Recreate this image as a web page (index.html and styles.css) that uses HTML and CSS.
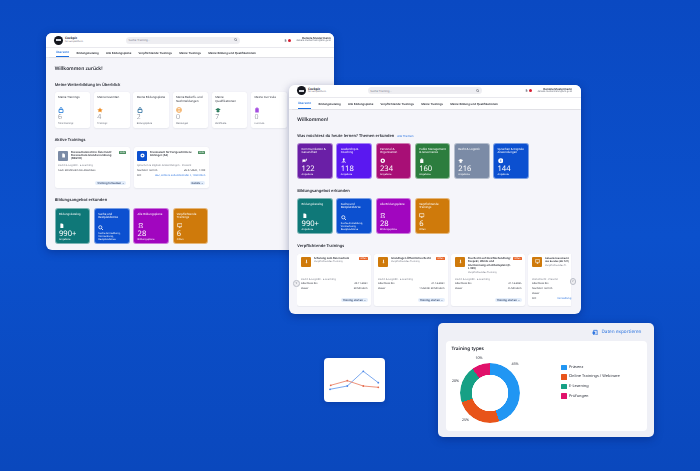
FILE: index.html
```html
<!DOCTYPE html>
<html lang="de">
<head>
    <meta charset="UTF-8">
    <meta name="viewport" content="width=device-width, initial-scale=1.0">
    <title>Cockpit | Bildungsportal</title>
    <link rel="stylesheet" href="styles.css">
</head>
<body>

    <svg class="icon-sprite" aria-hidden="true">
        <symbol id="i-bag" viewBox="0 0 12 12"><path d="M2 5h8v6H2zM4 5V3a2 2 0 0 1 4 0v2" fill="none" stroke="currentColor" stroke-width="1.6"/></symbol>
        <symbol id="i-star" viewBox="0 0 12 12"><path d="M6 .8l1.7 3.5 3.8.5-2.8 2.6.7 3.8L6 8.9l-3.4 1.8.7-3.8L.5 4.8l3.8-.5z" fill="currentColor"/></symbol>
        <symbol id="i-doc" viewBox="0 0 12 12"><path d="M3 1h4l2.5 2.5V11H3z" fill="currentColor"/></symbol>
        <symbol id="i-mail" viewBox="0 0 12 12"><circle cx="6" cy="6" r="5" fill="none" stroke="currentColor" stroke-width="1.3"/><path d="M3 4.5h6v3.5H3zM3 4.5l3 2 3-2" fill="none" stroke="currentColor"/></symbol>
        <symbol id="i-cap" viewBox="0 0 12 12"><path d="M6 2L.5 5 6 8l5.500-3zM3 7.500v2l3 1.500 3-1.500v-2" fill="currentColor"/></symbol>
        <symbol id="i-clip" viewBox="0 0 12 12"><path d="M2.500 2.500h7V11h-7z" fill="currentColor"/><path d="M4.500 1h3v2.500h-3z" fill="currentColor"/></symbol>
        <symbol id="i-search" viewBox="0 0 12 12"><circle cx="5" cy="5" r="3.500" fill="none" stroke="currentColor" stroke-width="1.600"/><path d="M7.500 7.500L11 11" stroke="currentColor" stroke-width="1.800"/></symbol>
        <symbol id="i-plan" viewBox="0 0 12 12"><path d="M2.500 1h7v3.500L7 6l2.500 1.500V11h-7V7.500L5 6 2.500 4.500z" fill="none" stroke="currentColor" stroke-width="1.500"/></symbol>
        <symbol id="i-screen" viewBox="0 0 12 12"><path d="M1 1.500h10V8H1zM4 11h4M6 8v3" fill="none" stroke="currentColor" stroke-width="1.400"/></symbol>
        <symbol id="i-chat" viewBox="0 0 12 12"><path d="M1 3h7v5H3L1 10zM9 1.500h2V6H9.500" fill="currentColor"/></symbol>
        <symbol id="i-people" viewBox="0 0 12 12"><circle cx="6" cy="2.500" r="2" fill="currentColor"/><path d="M6 5L2 10.500M6 5l4 5.500M6 5v5.500" stroke="currentColor" stroke-width="1.500"/></symbol>
        <symbol id="i-gear" viewBox="0 0 12 12"><circle cx="6" cy="6" r="3.500" fill="none" stroke="currentColor" stroke-width="3"/></symbol>
        <symbol id="i-info" viewBox="0 0 12 12"><circle cx="6" cy="6" r="5.500" fill="currentColor"/><path d="M6 3.500v5" stroke="#0c50d0" stroke-width="1.500"/></symbol>
        <symbol id="i-mic" viewBox="0 0 12 12"><path d="M5 1.500h2V7H5zM3.500 8h5L6 11z" fill="currentColor"/></symbol>
    </svg>

    <!-- Erstes Fenster: Startseite -->
    <section class="window window-start">
        <header class="topbar">
            <div class="brand">
                <span class="logo"><i></i></span>
                <div>
                    <div class="brand-name">Cockpit</div>
                    <div class="brand-sub">für Lernplattform</div>
                </div>
            </div>
            <div class="search">Suche Training...<svg class="search-icon"><use href="#i-search"/></svg></div>
            <div class="user">
                <svg class="bell"><use href="#i-doc"/></svg>
                <span class="flag"></span>
                <div class="user-text">
                    <div class="user-name">Daniela Mustermann</div>
                    <div class="user-mail">daniela.mustermann@bmi.gv.at</div>
                </div>
            </div>
        </header>
        <nav class="tabs">
            <a class="active">Übersicht</a>
            <a>Bildungskatalog</a>
            <a>Alle Bildungspläne</a>
            <a>Verpflichtende Trainings</a>
            <a>Meine Trainings</a>
            <a>Meine Bildung und Qualifikationen</a>
        </nav>
        <main class="content">
            <h1>Willkommen zurück!</h1>

            <h2 class="first">Meine Weiterbildung im Überblick</h2>
            <div class="row-six">
                <div class="stat">
                    <div class="stat-title">Meine Trainings</div>
                    <svg class="stat-icon c-blue"><use href="#i-bag"/></svg>
                    <div class="stat-num">6</div>
                    <div class="stat-label">Total trainings</div>
                </div>
                <div class="stat">
                    <div class="stat-title">Meine Favoriten</div>
                    <svg class="stat-icon c-orange"><use href="#i-star"/></svg>
                    <div class="stat-num">4</div>
                    <div class="stat-label">Trainings</div>
                </div>
                <div class="stat">
                    <div class="stat-title">Meine Bildungspläne</div>
                    <svg class="stat-icon c-navy"><use href="#i-bag"/></svg>
                    <div class="stat-num">2</div>
                    <div class="stat-label">Bildungspläne</div>
                </div>
                <div class="stat">
                    <div class="stat-title">Meine Bedarfs- und Nachmeldungen</div>
                    <svg class="stat-icon c-orange"><use href="#i-mail"/></svg>
                    <div class="stat-num">0</div>
                    <div class="stat-label">Meldungen</div>
                </div>
                <div class="stat">
                    <div class="stat-title">Meine Qualifikationen</div>
                    <svg class="stat-icon c-green"><use href="#i-cap"/></svg>
                    <div class="stat-num">7</div>
                    <div class="stat-label">Zertifikate</div>
                </div>
                <div class="stat">
                    <div class="stat-title">Meine Curricula</div>
                    <svg class="stat-icon c-violet"><use href="#i-clip"/></svg>
                    <div class="stat-num">0</div>
                    <div class="stat-label">Curricula</div>
                </div>
            </div>

            <h2>Aktive Trainings</h2>
            <div class="row-active">
                <div class="active-card">
                    <div class="active-head">
                        <span class="thumb bg-gray"><svg><use href="#i-doc"/></svg></span>
                        <div class="active-title">Datenschutzrecht in Österreich: Datenschutz-Grundverordnung (DSGVO)</div>
                        <span class="badge badge-green">Aktiv</span>
                    </div>
                    <div class="meta">Recht &amp; Logistik · E-Learning</div>
                    <div class="meta dark">noch 38 Minuten bis Abschluss</div>
                    <span class="pill">Training fortsetzen →</span>
                </div>
                <div class="active-card">
                    <div class="active-head">
                        <span class="thumb bg-blue"><svg><use href="#i-gear"/></svg></span>
                        <div class="active-title">Französisch für Fortgeschrittene Anfänger (A2)</div>
                        <span class="badge badge-green">Aktiv</span>
                    </div>
                    <div class="meta">Sprachen &amp; Digitale Anwendungen · Präsenz</div>
                    <div class="kv"><span>Nächster Termin</span><span>26.07.2024, 14:00</span></div>
                    <div class="kv"><span>Ort</span><a>BFZ, Hintere Zollamtsstraße 4, 1030 Wien</a></div>
                    <span class="pill">Details →</span>
                </div>
            </div>

            <h2>Bildungsangebot erkunden</h2>
            <div class="row-six">
                <div class="tile bg-teal">
                    <div class="tile-title">Bildungskatalog</div>
                    <svg class="tile-icon"><use href="#i-doc"/></svg>
                    <div class="tile-num">990+</div>
                    <div class="tile-label">Angebote</div>
                </div>
                <div class="tile bg-blue">
                    <div class="tile-title">Suche und Restplatzbörse</div>
                    <svg class="tile-icon"><use href="#i-search"/></svg>
                    <div class="tile-label">Suche Anmeldung, Vormerkung, Restplatzbörse</div>
                </div>
                <div class="tile bg-purple">
                    <div class="tile-title">Alle Bildungspläne</div>
                    <svg class="tile-icon"><use href="#i-plan"/></svg>
                    <div class="tile-num">28</div>
                    <div class="tile-label">Bildungspläne</div>
                </div>
                <div class="tile bg-orange">
                    <div class="tile-title">Verpflichtende Trainings</div>
                    <svg class="tile-icon"><use href="#i-screen"/></svg>
                    <div class="tile-num">6</div>
                    <div class="tile-label">Offen</div>
                </div>
            </div>
        </main>
    </section>

    <!-- Zweites Fenster: Themen -->
    <section class="window window-topics">
        <header class="topbar">
            <div class="brand">
                <span class="logo"><i></i></span>
                <div>
                    <div class="brand-name">Cockpit</div>
                    <div class="brand-sub">für Lernplattform</div>
                </div>
            </div>
            <div class="search">Suche Training...<svg class="search-icon"><use href="#i-search"/></svg></div>
            <div class="user">
                <svg class="bell"><use href="#i-doc"/></svg>
                <span class="flag"></span>
                <div class="user-text">
                    <div class="user-name">Daniela Mustermann</div>
                    <div class="user-mail">daniela.mustermann@bmi.gv.at</div>
                </div>
            </div>
        </header>
        <nav class="tabs">
            <a class="active">Übersicht</a>
            <a>Bildungskatalog</a>
            <a>Alle Bildungspläne</a>
            <a>Verpflichtende Trainings</a>
            <a>Meine Trainings</a>
            <a>Meine Bildung und Qualifikationen</a>
        </nav>
        <main class="content">
            <h1>Willkommen!</h1>

            <h2 class="first">Was möchtest du heute lernen? Themen erkunden <a class="link">Alle Themen</a></h2>
            <div class="row-six">
                <div class="tile bg-plum">
                    <div class="tile-title">Kommunikation &amp; Gesundheit</div>
                    <svg class="tile-icon"><use href="#i-chat"/></svg>
                    <div class="tile-num">122</div>
                    <div class="tile-label">Angebote</div>
                </div>
                <div class="tile bg-violet">
                    <div class="tile-title">Leadership &amp; Coaching</div>
                    <svg class="tile-icon"><use href="#i-people"/></svg>
                    <div class="tile-num">118</div>
                    <div class="tile-label">Angebote</div>
                </div>
                <div class="tile bg-magenta">
                    <div class="tile-title">Personal &amp; Organisation</div>
                    <svg class="tile-icon"><use href="#i-gear"/></svg>
                    <div class="tile-num">234</div>
                    <div class="tile-label">Angebote</div>
                </div>
                <div class="tile bg-green">
                    <div class="tile-title">Public Management &amp; Governance</div>
                    <svg class="tile-icon"><use href="#i-clip"/></svg>
                    <div class="tile-num">160</div>
                    <div class="tile-label">Angebote</div>
                </div>
                <div class="tile bg-gray">
                    <div class="tile-title">Recht &amp; Logistik</div>
                    <svg class="tile-icon"><use href="#i-cap"/></svg>
                    <div class="tile-num">216</div>
                    <div class="tile-label">Angebote</div>
                </div>
                <div class="tile bg-blue">
                    <div class="tile-title">Sprachen &amp; Digitale Anwendungen</div>
                    <svg class="tile-icon"><use href="#i-info"/></svg>
                    <div class="tile-num">144</div>
                    <div class="tile-label">Angebote</div>
                </div>
            </div>

            <h2 class="tight">Bildungsangebot erkunden</h2>
            <div class="row-six">
                <div class="tile bg-teal">
                    <div class="tile-title">Bildungskatalog</div>
                    <svg class="tile-icon"><use href="#i-doc"/></svg>
                    <div class="tile-num">990+</div>
                    <div class="tile-label">Angebote</div>
                </div>
                <div class="tile bg-blue">
                    <div class="tile-title">Suche und Restplatzbörse</div>
                    <svg class="tile-icon"><use href="#i-search"/></svg>
                    <div class="tile-label">Suche Anmeldung, Vormerkung, Restplatzbörse</div>
                </div>
                <div class="tile bg-purple">
                    <div class="tile-title">Alle Bildungspläne</div>
                    <svg class="tile-icon"><use href="#i-plan"/></svg>
                    <div class="tile-num">28</div>
                    <div class="tile-label">Bildungspläne</div>
                </div>
                <div class="tile bg-orange">
                    <div class="tile-title">Verpflichtende Trainings</div>
                    <svg class="tile-icon"><use href="#i-screen"/></svg>
                    <div class="tile-num">6</div>
                    <div class="tile-label">Offen</div>
                </div>
            </div>

            <h2>Verpflichtende Trainings</h2>
            <div class="carousel">
                <div class="carousel-track">
                    <div class="course">
                        <div class="course-head">
                            <span class="thumb bg-orange"><svg><use href="#i-mic"/></svg></span>
                            <div class="course-text">
                                <div class="course-title">Schulung zum Datenschutz</div>
                                <div class="course-sub">Verpflichtendes Training</div>
                            </div>
                            <span class="badge badge-orange">Offen</span>
                        </div>
                        <div class="meta">Recht &amp; Logistik · E-Learning</div>
                        <div class="kv"><span>Abschluss bis</span><span>30.11.2024</span></div>
                        <div class="kv"><span>Dauer</span><span>30 Minuten</span></div>
                        <span class="pill">Training starten →</span>
                    </div>
                    <div class="course">
                        <div class="course-head">
                            <span class="thumb bg-orange"><svg><use href="#i-mic"/></svg></span>
                            <div class="course-text">
                                <div class="course-title">Grundlagen Öffentliches Recht</div>
                                <div class="course-sub">Verpflichtendes Training</div>
                            </div>
                            <span class="badge badge-orange">Offen</span>
                        </div>
                        <div class="meta">Recht &amp; Logistik · E-Learning</div>
                        <div class="kv"><span>Abschluss bis</span><span>31.12.2024</span></div>
                        <div class="kv"><span>Dauer</span><span>1 Stunde 30 Minuten</span></div>
                        <span class="pill">Training starten →</span>
                    </div>
                    <div class="course">
                        <div class="course-head">
                            <span class="thumb bg-orange"><svg><use href="#i-mic"/></svg></span>
                            <div class="course-text">
                                <div class="course-title">Das Recht auf Gleichbehandlung: Respekt, Würde und Anerkennung am Arbeitsplatz (E-L 999)</div>
                                <div class="course-sub">Verpflichtendes Training</div>
                            </div>
                            <span class="badge badge-orange">Offen</span>
                        </div>
                        <div class="meta">Recht &amp; Logistik · E-Learning</div>
                        <div class="kv"><span>Abschluss bis</span><span>31.12.2025</span></div>
                        <div class="kv"><span>Dauer</span><span>45 Minuten</span></div>
                        <span class="pill">Training starten →</span>
                    </div>
                    <div class="course course-last">
                        <div class="course-head">
                            <span class="thumb bg-orange"><svg><use href="#i-screen"/></svg></span>
                            <div class="course-text">
                                <div class="course-title">Aktuelle Dienstrecht des Bundes (BD 727)</div>
                                <div class="course-sub">Verpflichtendes Tr.</div>
                            </div>
                        </div>
                        <div class="meta">Dienstrecht · Präsenz</div>
                        <div class="kv"><span>Abschluss bis</span></div>
                        <div class="kv"><span>Nächster Termin</span></div>
                        <div class="kv"><span>Dauer</span></div>
                        <div class="kv"><span>Ort</span><a>Verwaltung</a></div>
                    </div>
                </div>
                <span class="arrow arrow-left">‹</span>
                <span class="arrow arrow-right">›</span>
            </div>
        </main>
    </section>

    <!-- Kleines Liniendiagramm -->
    <div class="mini-chart">
        <svg viewBox="0 0 61 44" width="61" height="44">
            <polyline class="line-blue" points="6,31.300 23.300,28 39.300,13.300 54.300,24.700"/>
            <polyline class="line-orange" points="6.700,27.300 23.300,22.700 39.300,28 54.300,29.300"/>
            <g class="dots-blue">
                <circle cx="6" cy="31.300" r="0.900"/><circle cx="23.300" cy="28" r="0.900"/><circle cx="39.300" cy="13.300" r="0.900"/><circle cx="54.300" cy="24.700" r="0.900"/>
            </g>
            <g class="dots-orange">
                <circle cx="6.700" cy="27.300" r="0.900"/><circle cx="23.300" cy="22.700" r="0.900"/><circle cx="39.300" cy="28" r="0.900"/><circle cx="54.300" cy="29.300" r="0.900"/>
            </g>
        </svg>
    </div>

    <!-- Auswertung Trainingsarten -->
    <section class="report">
        <div class="export">
            <svg class="export-icon" viewBox="0 0 12 12"><path d="M3 2.500h6.500V11H3z" fill="none" stroke="currentColor" stroke-width="1.500"/><path d="M1 5h5v4H1z" fill="currentColor"/></svg>
            Daten exportieren
        </div>
        <div class="report-card">
            <div class="report-title">Training types</div>
            <div class="report-body">
                <div class="donut-wrap">
                    <div class="donut"></div>
                    <span class="pct pct-45">45%</span>
                    <span class="pct pct-25">25%</span>
                    <span class="pct pct-20">20%</span>
                    <span class="pct pct-10">10%</span>
                </div>
                <ul class="legend">
                    <li><i class="swatch s-blue"></i>Präsenz</li>
                    <li><i class="swatch s-orange"></i>Online Trainings / Webinare</li>
                    <li><i class="swatch s-teal"></i>E-Learning</li>
                    <li><i class="swatch s-pink"></i>Prüfungen</li>
                </ul>
            </div>
        </div>
    </section>

</body>
</html>
```

FILE: styles.css
```css
* {
    box-sizing: border-box;
}

html, body {
    margin: 0;
    height: 100%;
}

body {
    position: relative;
    width: 700px;
    height: 471px;
    overflow: hidden;
    background: linear-gradient(180deg, #0a49c2 0%, #0b50cc 50%, #0a48bd 100%);
    font-family: "Noto Sans", "Open Sans", sans-serif;
    color: #23262f;
    text-rendering: geometricPrecision;
}

.icon-sprite {
    display: none;
}

/* windows sit freely on the blue canvas */
.window {
    position: absolute;
    overflow: hidden;
    border-radius: 6px;
    background: #f5f5fa;
    box-shadow: 0 2px 8px rgba(0, 20, 80, 0.35);
    filter: blur(0.25px);
}

.window-start {
    left: 46px;
    top: 33px;
    width: 288px;
    height: 217px;
    --head-h: 14.3px;
    --tab-h: 10px;
    --brand-w: 72px;
    --h1-top: 9px;
    --user-pad: 3.300px;
    --tab-pad: 10px;
}

.window-topics {
    left: 289px;
    top: 84.500px;
    width: 292px;
    height: 229px;
    --head-h: 12.800px;
    --tab-h: 12px;
    --brand-w: 70.700px;
    --h1-top: 8px;
    --user-pad: 9px;
    --tab-pad: 9px;
}

/* top bar */
.topbar {
    display: flex;
    align-items: center;
    height: var(--head-h);
    padding: 0 var(--user-pad) 0 8px;
    background: #fff;
}

.brand {
    display: flex;
    align-items: center;
    gap: 2px;
    flex: 0 0 var(--brand-w);
}

.logo {
    display: flex;
    align-items: center;
    justify-content: center;
    width: 9px;
    height: 9px;
    border-radius: 50%;
    background: #14161d;
}

.logo i {
    width: 5px;
    height: 1.500px;
    background: #d7d9e0;
}

.brand-name {
    font-size: 3.200px;
    font-weight: 700;
    line-height: 3.800px;
}

.brand-sub {
    font-size: 2.200px;
    line-height: 2.600px;
    color: #5f6472;
}

.search {
    display: flex;
    align-items: center;
    justify-content: space-between;
    flex: 0 0 114px;
    height: 7px;
    padding: 0 2.500px;
    border-radius: 4px;
    background: #eeeef2;
    font-size: 2.800px;
    color: #7d818c;
}

.search-icon {
    width: 3.500px;
    height: 3.500px;
    color: #555a66;
}

.user {
    display: flex;
    align-items: center;
    gap: 1px;
    margin-left: auto;
}

.bell {
    width: 3px;
    height: 3px;
    color: #8a8e99;
}

.flag {
    width: 3px;
    height: 3px;
    margin-right: 4px;
    border-radius: 50%;
    background: #d81b30;
}

.user-text {
    text-align: right;
}

.user-name {
    font-size: 2.800px;
    font-weight: 600;
    line-height: 3.300px;
}

.user-mail {
    font-size: 2.300px;
    line-height: 2.900px;
    color: #5f6472;
}

/* tabs */
.tabs {
    display: flex;
    align-items: center;
    gap: 7.300px;
    height: var(--tab-h);
    padding: 0 var(--tab-pad);
    background: #fff;
    border-top: 0.500px solid #e9e9ee;
    box-shadow: 0 0.500px 1px rgba(0, 0, 0, 0.08);
    font-size: 2.800px;
    font-weight: 600;
}

.tabs a {
    display: flex;
    align-items: center;
    height: 100%;
    color: #23262f;
}

.tabs a.active {
    color: #1a6ee0;
    border-bottom: 0.700px solid #1a6ee0;
}

/* main area */
.content {
    padding: var(--h1-top) 0 0 8.700px;
}

.window-topics .content {
    padding-left: 8.300px;
}

h1 {
    margin: 0 0 10.500px;
    font-size: 4.800px;
    font-weight: 600;
    line-height: 6px;
}

h2 {
    margin: 10px 0 4.600px;
    font-size: 3.950px;
    font-weight: 600;
    line-height: 5px;
}

h2.first {
    margin-top: 0;
}

h2.tight {
    margin-top: 9.300px;
}

.link {
    margin-left: 2px;
    font-size: 2.800px;
    font-weight: 400;
    color: #2c74e0;
}

.row-six {
    display: grid;
    grid-template-columns: repeat(6, 35.600px);
    gap: 3.700px;
}

.window-topics .row-six {
    gap: 3.600px;
}

/* white stat cards */
.stat {
    display: flex;
    flex-direction: column;
    height: 35.500px;
    padding: 3.500px 3.400px 3px;
    border-radius: 2.500px;
    background: #fff;
    box-shadow: 0 0.500px 1.500px rgba(40, 50, 90, 0.07);
}

.stat-title {
    font-size: 2.900px;
    line-height: 3.900px;
    color: #2c303b;
}

.stat-icon {
    width: 6px;
    height: 6px;
    margin-top: auto;
    margin-bottom: 1.300px;
}

.stat-num {
    font-size: 7px;
    font-weight: 300;
    line-height: 7.200px;
    color: #6f7380;
}

.stat-label {
    font-size: 2.300px;
    line-height: 3.200px;
    color: #5f6472;
}

.c-blue { color: #1e79d8; }
.c-orange { color: #ef8c22; }
.c-navy { color: #2d6f9f; }
.c-green { color: #2e7d5f; }
.c-violet { color: #a54ee0; }

/* aktive trainings */
.row-active {
    display: grid;
    grid-template-columns: repeat(2, 75px);
    gap: 4px;
}

.active-card,
.course {
    position: relative;
    border-radius: 2.500px;
    background: #fff;
    box-shadow: 0 0.500px 1.500px rgba(40, 50, 90, 0.07);
}

.active-card {
    height: 41px;
    padding: 3.400px 3.400px;
}

.active-head {
    display: flex;
    align-items: flex-start;
    gap: 3px;
    height: 12.300px;
}

.active-title {
    flex: 1;
    font-size: 2.650px;
    font-weight: 600;
    line-height: 3.300px;
}

.thumb {
    display: flex;
    align-items: center;
    justify-content: center;
    flex: 0 0 10px;
    height: 10px;
    border-radius: 1px;
    color: #fff;
}

.thumb svg {
    width: 5px;
    height: 5px;
}

.badge {
    flex: 0 0 auto;
    height: 3.400px;
    margin-left: -1.500px;
    padding: 0 1.200px;
    border-radius: 0.600px;
    font-size: 2.200px;
    line-height: 3.400px;
    color: #fff;
}

.badge-green { background: #4f8f63; }
.badge-orange { background: #e8662a; }

.meta {
    font-size: 2.600px;
    line-height: 4.700px;
    color: #777b87;
}

.meta.dark {
    color: #2c303b;
}

.kv {
    display: flex;
    justify-content: space-between;
    font-size: 2.600px;
    line-height: 4.900px;
    color: #2c303b;
}

.kv a {
    color: #2c74e0;
}

.pill {
    position: absolute;
    right: 3.400px;
    bottom: 3.100px;
    height: 4.800px;
    padding: 0 1.800px;
    border-radius: 2.400px;
    background: #e4eefb;
    font-size: 2.600px;
    font-weight: 600;
    line-height: 4.800px;
    color: #2a3f66;
}

/* coloured tiles */
.tile {
    display: flex;
    flex-direction: column;
    height: 36px;
    padding: 3.500px 3.300px 2.400px;
    border: 0.500px solid rgba(255, 255, 255, 0.45);
    border-radius: 3px;
    color: #fff;
}

.tile-title {
    font-size: 2.850px;
    line-height: 3.600px;
}

.tile-icon {
    width: 5.500px;
    height: 5.500px;
    margin-top: auto;
    margin-bottom: 1.500px;
}

.tile-num {
    font-size: 7.600px;
    line-height: 8px;
}

.tile-label {
    font-size: 2.500px;
    line-height: 3px;
}

.bg-teal { background: #0f7878; }
.bg-blue { background: #0c50d0; }
.bg-purple { background: #a106bf; }
.bg-orange { background: #cf7a0b; }
.bg-plum { background: #6a1fa6; }
.bg-violet { background: #5a18f0; }
.bg-magenta { background: #a80f76; }
.bg-green { background: #2c7d3e; }
.bg-gray { background: #7b8ba6; }

/* carousel */
.carousel {
    position: relative;
    width: 275px;
}

.carousel-track {
    display: flex;
    gap: 3px;
    overflow: hidden;
    padding-bottom: 1px;
}

.course {
    flex: 0 0 74px;
    height: 51.700px;
    padding: 3px 3.800px;
}

.course-last {
    flex-basis: 43px;
    padding-right: 0;
    border-radius: 2.500px 0 0 2.500px;
}

.course-last .course-title {
    font-size: 2.400px;
}

.course-head {
    display: flex;
    align-items: flex-start;
    gap: 3px;
    height: 19.700px;
}

.course-text {
    flex: 1;
}

.course-title {
    font-size: 2.650px;
    font-weight: 600;
    line-height: 3.400px;
}

.course-sub {
    font-size: 2.500px;
    line-height: 3.500px;
    color: #777b87;
}

.arrow {
    position: absolute;
    display: flex;
    align-items: center;
    justify-content: center;
    width: 6.700px;
    height: 6.700px;
    border: 0.600px solid #b9bcc6;
    border-radius: 50%;
    background: #eeeef2;
    font-size: 4.500px;
    line-height: 1;
    color: #555a66;
}

.arrow-left { left: -4.400px; top: 26.300px; }
.arrow-right { right: -4px; top: 24.300px; }

/* small line chart */
.mini-chart {
    position: absolute;
    left: 324px;
    top: 358px;
    width: 61px;
    height: 44px;
    border-radius: 4px;
    background: #fff;
    box-shadow: 0 1px 5px rgba(0, 20, 80, 0.25);
    filter: blur(0.25px);
}

.line-blue,
.line-orange {
    fill: none;
    stroke-width: 0.800;
}

.line-blue { stroke: #5b93ea; }
.line-orange { stroke: #e8775a; }
.dots-blue { fill: #4a86e8; }
.dots-orange { fill: #e56a4c; }

/* report */
.report {
    position: absolute;
    left: 438px;
    top: 323px;
    width: 215.500px;
    height: 114px;
    padding: 0 6.500px 6px 8px;
    border-radius: 5px;
    background: #eff0f6;
    box-shadow: 0 2px 8px rgba(0, 20, 80, 0.35);
    filter: blur(0.25px);
}

.export {
    display: flex;
    align-items: center;
    justify-content: flex-end;
    gap: 2.500px;
    height: 18px;
    padding-right: 5.500px;
    font-size: 4.700px;
    color: #2c74e0;
}

.export-icon {
    width: 6.500px;
    height: 6.500px;
}

.report-card {
    height: 90px;
    padding: 4.500px 5.500px;
    border-radius: 4px;
    background: #fff;
}

.report-title {
    font-size: 4.700px;
    font-weight: 600;
    line-height: 6px;
}

.report-body {
    display: flex;
    align-items: flex-start;
}

.donut-wrap {
    position: relative;
    flex: 0 0 109.500px;
    height: 75px;
}

.donut {
    position: absolute;
    left: 8.500px;
    top: 11.500px;
    width: 60px;
    height: 60px;
    border-radius: 50%;
    background: conic-gradient(#2196f3 0 45%, #e8541a 45% 70%, #16a085 70% 90%, #e0116a 90% 100%);
    -webkit-mask: radial-gradient(circle, transparent 18px, #000 18.500px);
    mask: radial-gradient(circle, transparent 18px, #000 18.500px);
}

.pct {
    position: absolute;
    font-size: 3.600px;
    line-height: 4px;
    color: #2c303b;
}

.pct-45 { left: 60px; top: 11.800px; }
.pct-25 { left: 10.500px; top: 67.500px; }
.pct-20 { left: 0.500px; top: 28.200px; }
.pct-10 { left: 24px; top: 5.800px; }

.legend {
    margin: 11px 0 0;
    padding: 0;
    list-style: none;
    font-size: 3.900px;
    color: #2c303b;
}

.legend li {
    display: flex;
    align-items: center;
    gap: 2.500px;
    height: 9.600px;
}

.swatch {
    width: 5.500px;
    height: 5.500px;
    border-radius: 0.500px;
}

.s-blue { background: #2196f3; }
.s-orange { background: #e8541a; }
.s-teal { background: #16a085; }
.s-pink { background: #e0116a; }
```
